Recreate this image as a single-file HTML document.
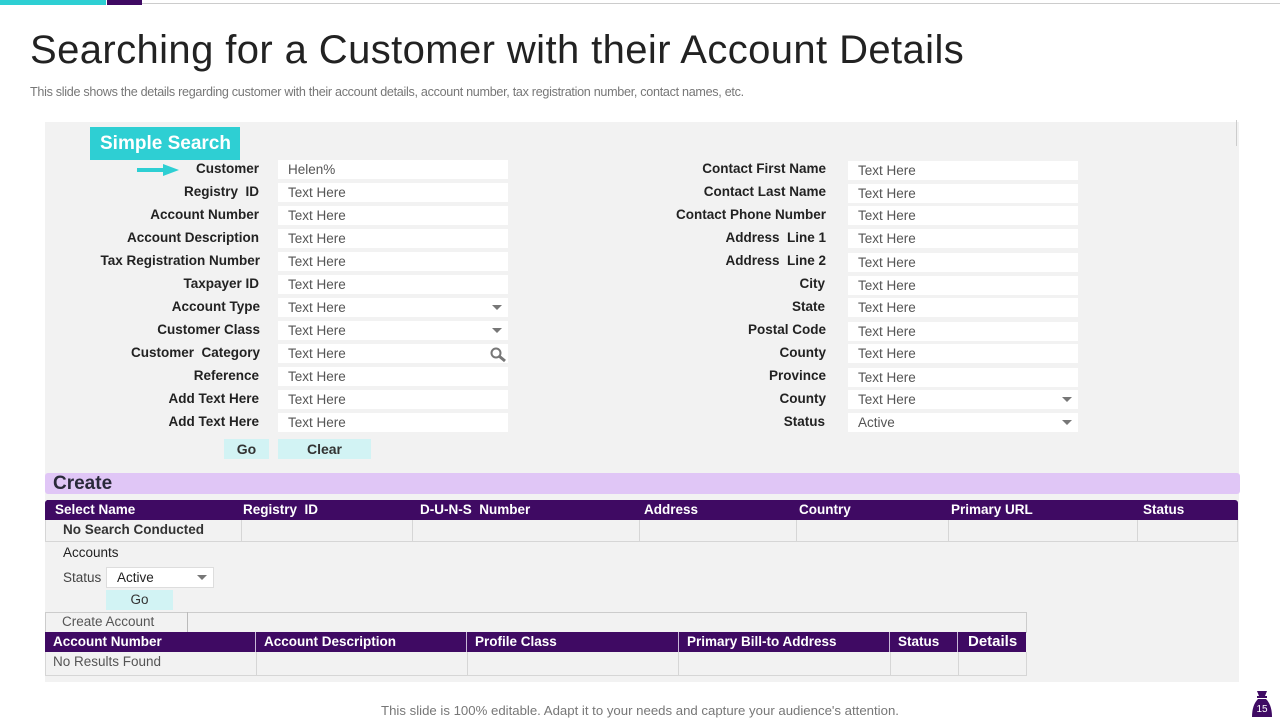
<!DOCTYPE html><html><head><style>
*{margin:0;padding:0;box-sizing:border-box}
body{width:1280px;height:720px;position:relative;background:#fff;font-family:"Liberation Sans",sans-serif;overflow:hidden}
.a{position:absolute}
.lb{position:absolute;font-size:13.5px;font-weight:bold;color:#222;text-align:right;line-height:18px}
.in{position:absolute;background:#fff;height:19px;font-size:13.5px;color:#555;padding-left:10px;line-height:19px;width:230px}
.dd::after{content:"";position:absolute;right:6px;top:7px;border:5px solid transparent;border-top:5px solid #777;border-bottom:0}
.th{position:absolute;color:#fff;font-weight:bold;font-size:13.5px;line-height:20px;padding-left:8px;background:#3f0a63;border-right:1px solid #c9b9d8}
.td{position:absolute;border-right:1px solid #d6d6d6;border-bottom:1px solid #d6d6d6;font-size:13.5px;line-height:20px;padding-left:8px}
</style></head><body>
<div class="a" style="left:0;top:0;width:106px;height:5px;background:#2ecfd3"></div>
<div class="a" style="left:107px;top:0;width:35px;height:5px;background:#3f0a63"></div>
<div class="a" style="left:142px;top:3px;width:1138px;height:1px;background:#ccc"></div>
<div class="a" style="left:30px;top:28px;font-size:40px;color:#222;letter-spacing:0.4px;white-space:nowrap">Searching for a Customer with their Account Details</div>
<div class="a" style="left:30px;top:85px;font-size:12.6px;color:#777;letter-spacing:-0.3px;white-space:nowrap">This slide shows the details regarding customer with their account details, account number, tax registration number, contact names, etc.</div>
<div class="a" style="left:45px;top:122px;width:1194px;height:560px;background:#f2f2f2"></div>
<div class="a" style="left:1236px;top:120px;width:1px;height:26px;background:#ccc"></div>
<div class="a" style="left:90px;top:127px;width:150px;height:33px;background:#2ecfd3;color:#fff;font-weight:bold;font-size:19px;line-height:33px;padding-left:10px">Simple Search</div>
<div class="a" style="left:137px;top:168px;width:28px;height:4px;background:#2ecfd3"></div>
<div class="a" style="left:163px;top:164px;border-left:16px solid #2ecfd3;border-top:6px solid transparent;border-bottom:6px solid transparent"></div>
<div class="lb" style="right:1021px;top:160px">Customer</div>
<div class="lb" style="right:1021px;top:183px">Registry &nbsp;ID</div>
<div class="lb" style="right:1021px;top:206px">Account Number</div>
<div class="lb" style="right:1021px;top:229px">Account Description</div>
<div class="lb" style="right:1020px;top:252px">Tax Registration Number</div>
<div class="lb" style="right:1021px;top:275px">Taxpayer ID</div>
<div class="lb" style="right:1020px;top:298px">Account Type</div>
<div class="lb" style="right:1020px;top:321px">Customer Class</div>
<div class="lb" style="right:1020px;top:344px">Customer &nbsp;Category</div>
<div class="lb" style="right:1021px;top:367px">Reference</div>
<div class="lb" style="right:1021px;top:390px">Add Text Here</div>
<div class="lb" style="right:1021px;top:413px">Add Text Here</div>
<div class="in" style="left:278px;top:160px">Helen%</div>
<div class="in" style="left:278px;top:183px">Text Here</div>
<div class="in" style="left:278px;top:206px">Text Here</div>
<div class="in" style="left:278px;top:229px">Text Here</div>
<div class="in" style="left:278px;top:252px">Text Here</div>
<div class="in" style="left:278px;top:275px">Text Here</div>
<div class="in dd" style="left:278px;top:298px">Text Here</div>
<div class="in dd" style="left:278px;top:321px">Text Here</div>
<div class="in" style="left:278px;top:344px">Text Here<svg style="position:absolute;right:0;top:3px" width="18" height="16"><circle cx="6" cy="6" r="4.5" fill="none" stroke="#777" stroke-width="2"/><line x1="9" y1="9" x2="15" y2="14" stroke="#777" stroke-width="3"/></svg></div>
<div class="in" style="left:278px;top:367px">Text Here</div>
<div class="in" style="left:278px;top:390px">Text Here</div>
<div class="in" style="left:278px;top:413px">Text Here</div>
<div class="lb" style="right:454px;top:160px">Contact First Name</div>
<div class="lb" style="right:454px;top:183px">Contact Last Name</div>
<div class="lb" style="right:454px;top:206px">Contact Phone Number</div>
<div class="lb" style="right:454px;top:229px">Address &nbsp;Line 1</div>
<div class="lb" style="right:454px;top:252px">Address &nbsp;Line 2</div>
<div class="lb" style="right:455px;top:275px">City</div>
<div class="lb" style="right:455px;top:298px">State</div>
<div class="lb" style="right:454px;top:321px">Postal Code</div>
<div class="lb" style="right:454px;top:344px">County</div>
<div class="lb" style="right:454px;top:367px">Province</div>
<div class="lb" style="right:454px;top:390px">County</div>
<div class="lb" style="right:455px;top:413px">Status</div>
<div class="in" style="left:848px;top:161px">Text Here</div>
<div class="in" style="left:848px;top:184px">Text Here</div>
<div class="in" style="left:848px;top:206px">Text Here</div>
<div class="in" style="left:848px;top:229px">Text Here</div>
<div class="in" style="left:848px;top:253px">Text Here</div>
<div class="in" style="left:848px;top:276px">Text Here</div>
<div class="in" style="left:848px;top:298px">Text Here</div>
<div class="in" style="left:848px;top:322px">Text Here</div>
<div class="in" style="left:848px;top:344px">Text Here</div>
<div class="in" style="left:848px;top:368px">Text Here</div>
<div class="in dd" style="left:848px;top:390px">Text Here</div>
<div class="in dd" style="left:848px;top:413px">Active</div>
<div class="a" style="left:224px;top:439px;width:45px;height:20px;background:#d2f3f4;font-size:14px;font-weight:bold;color:#333;text-align:center;line-height:20px">Go</div>
<div class="a" style="left:278px;top:439px;width:93px;height:20px;background:#d2f3f4;font-size:14px;font-weight:bold;color:#333;text-align:center;line-height:20px">Clear</div>
<div class="a" style="left:45px;top:473px;width:1195px;height:21px;background:#e0c6f6;border-radius:3px;font-size:19px;font-weight:bold;color:#2a2a3a;padding-left:8px;line-height:21px">Create</div>
<div class="a" style="left:45px;top:500px;width:1193px;height:20px;background:#3f0a63;border-radius:3px 3px 0 0"></div>
<div class="th" style="left:47px;top:500px;width:194px;border:0">Select Name</div>
<div class="th" style="left:235px;top:500px;width:177px;background:none;border:0">Registry &nbsp;ID</div>
<div class="th" style="left:412px;top:500px;width:227px;background:none;border:0">D-U-N-S &nbsp;Number</div>
<div class="th" style="left:636px;top:500px;width:160px;background:none;border:0">Address</div>
<div class="th" style="left:791px;top:500px;width:157px;background:none;border:0">Country</div>
<div class="th" style="left:943px;top:500px;width:189px;background:none;border:0">Primary URL</div>
<div class="th" style="left:1135px;top:500px;width:100px;background:none;border:0">Status</div>
<div class="a" style="left:45px;top:520px;width:1193px;height:22px;border:1px solid #d6d6d6;border-top:0"></div>
<div class="td" style="left:55px;top:520px;width:187px;height:22px;font-weight:bold;color:#333;border-bottom:0">No Search Conducted</div>
<div class="td" style="left:242px;top:520px;width:171px;height:22px;border-bottom:0"></div>
<div class="td" style="left:413px;top:520px;width:227px;height:22px;border-bottom:0"></div>
<div class="td" style="left:640px;top:520px;width:157px;height:22px;border-bottom:0"></div>
<div class="td" style="left:797px;top:520px;width:152px;height:22px;border-bottom:0"></div>
<div class="td" style="left:949px;top:520px;width:189px;height:22px;border-bottom:0"></div>
<div class="a" style="left:63px;top:545px;font-size:13.5px;color:#222">Accounts</div>
<div class="a" style="left:63px;top:570px;font-size:13.5px;color:#444">Status</div>
<div class="in dd" style="left:106px;top:567px;width:108px;height:21px;border:1px solid #ddd;color:#222;line-height:19px">Active</div>
<div class="a" style="left:106px;top:590px;width:67px;height:20px;background:#d2f3f4;font-size:13.5px;color:#333;text-align:center;line-height:20px">Go</div>
<div class="a" style="left:45px;top:612px;width:982px;height:21px;border:1px solid #ccc;border-bottom:0"></div>
<div class="a" style="left:45px;top:612px;width:143px;height:21px;border-right:1px solid #bbb;font-size:13.5px;color:#555;padding-left:17px;line-height:20px">Create Account</div>
<div class="a" style="left:45px;top:632px;width:981px;height:20px;background:#3f0a63"></div>
<div class="th" style="left:45px;top:632px;width:211px">Account Number</div>
<div class="th" style="left:256px;top:632px;width:211px">Account Description</div>
<div class="th" style="left:467px;top:632px;width:212px">Profile Class</div>
<div class="th" style="left:679px;top:632px;width:211px">Primary Bill-to Address</div>
<div class="th" style="left:890px;top:632px;width:68px">Status</div>
<div class="th" style="left:958px;top:632px;width:68px;font-size:15px;padding-left:10px;border:0">Details</div>
<div class="a" style="left:45px;top:652px;width:982px;height:24px;border:1px solid #d6d6d6;border-top:0"></div>
<div class="td" style="left:45px;top:652px;width:212px;height:24px;color:#555;border-bottom:0">No Results Found</div>
<div class="td" style="left:257px;top:652px;width:211px;height:24px;border-bottom:0"></div>
<div class="td" style="left:468px;top:652px;width:211px;height:24px;border-bottom:0"></div>
<div class="td" style="left:679px;top:652px;width:212px;height:24px;border-bottom:0"></div>
<div class="td" style="left:891px;top:652px;width:68px;height:24px;border-bottom:0"></div>
<div class="a" style="left:0;top:703px;width:1280px;text-align:center;font-size:13.2px;color:#777">This slide is 100% editable. Adapt it to your needs and capture your audience's attention.</div>
<svg class="a" style="left:1251px;top:689px" width="22" height="30"><path d="M6 2h10l-2 5h-6z" fill="#3f0a63"/><rect x="6" y="7" width="10" height="2" fill="#3f0a63"/><path d="M7 10h8c4 4 6 10 6 18H1c0-8 2-14 6-18z" fill="#3f0a63"/><text x="11" y="23" font-size="10" fill="#fff" text-anchor="middle" font-family="Liberation Sans">15</text></svg>
</body></html>
